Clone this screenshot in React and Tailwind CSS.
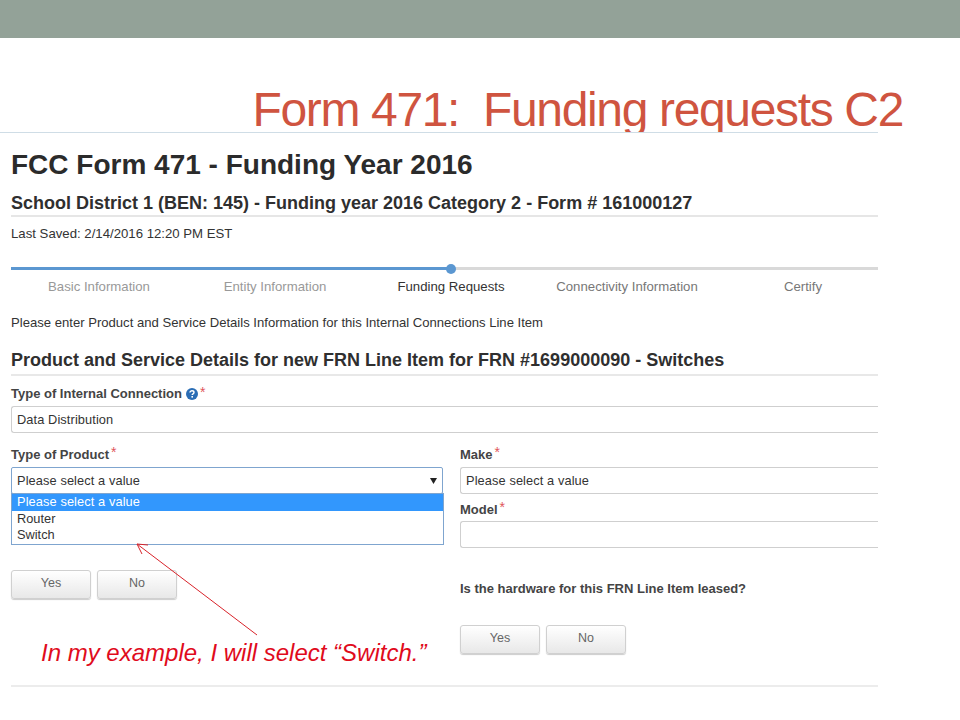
function Req() {
  return <span className="text-[#e0555a] text-[14px] font-normal relative -top-[2px] ml-[2px]">*</span>;
}

function Btn({ label }) {
  return (
    <button className="w-[80px] h-[29px] rounded-[3px] border border-[#d0d0d0] bg-gradient-to-b from-white to-[#e8e8e8] shadow-[0_1px_1px_rgba(0,0,0,0.2)] text-[12.5px] text-[#666] pb-[3px]">
      {label}
    </button>
  );
}

function Label({ children, className = "" }) {
  return <div className={`text-[13px] leading-[16px] font-bold text-[#444] ${className}`}>{children}</div>;
}

function Field({ children, className = "" }) {
  return (
    <div className={`h-[27px] rounded-l-[3px] border border-r-0 border-[#cfcfcf] flex items-center pl-[5px] text-[12.8px] tracking-[0.1px] text-[#333] ${className}`}>
      {children}
    </div>
  );
}

const steps = [
  ["Basic Information", "text-[#999]"],
  ["Entity Information", "text-[#999]"],
  ["Funding Requests", "text-[#333]"],
  ["Connectivity Information", "text-[#777]"],
  ["Certify", "text-[#777]"],
];

export default function App() {
  return (
    <div className="relative w-[960px] h-[720px] overflow-hidden bg-white font-['Liberation_Sans',Arial,sans-serif]">
      <div className="h-[38px] bg-[#93a298]" />
      <div className="h-[94px] overflow-hidden flex justify-end pr-[57px]">
        <h1 className="mt-[39px] text-[48px] leading-[66px] tracking-[-1.35px] whitespace-pre text-[#cf5440]">Form 471:  Funding requests C2</h1>
      </div>
      <div className="w-[878px] border-t border-[#cfdde6] pl-[11px]">
        <div className="mt-[14px] text-[28px] leading-[36px] font-bold text-[#2b2b2b]">FCC Form 471 - Funding Year 2016</div>
        <div className="mt-[10px] text-[18px] leading-[20px] font-bold text-[#2f2f2f]">School District 1 (BEN: 145) - Funding year 2016 Category 2 - Form # 161000127</div>
        <div className="mt-[2px] h-[2px] bg-[#e6e6e6]" />
        <div className="mt-[9px] text-[13.2px] leading-[16px] text-[#333]">Last Saved: 2/14/2016 12:20 PM EST</div>

        <div className="relative mt-[25px] h-[3px] bg-[#d9d9d9]">
          <div className="h-[3px] w-[440px] bg-[#5b97d1]" />
          <div className="absolute left-[435px] -top-[3.5px] w-[10px] h-[10px] rounded-full bg-[#5b97d1]" />
        </div>
        <div className="mt-[8px] grid grid-cols-[repeat(5,176px)] text-[13.2px] leading-[18px] text-center">
          {steps.map(([s, c]) => (
            <div key={s} className={c}>{s}</div>
          ))}
        </div>

        <div className="mt-[18px] text-[13.1px] leading-[18px] text-[#333]">Please enter Product and Service Details Information for this Internal Connections Line Item</div>
        <div className="mt-[17px] text-[18px] leading-[22px] font-bold text-[#2f2f2f]">Product and Service Details for new FRN Line Item for FRN #1699000090 - Switches</div>
        <div className="mt-[3px] h-[2px] bg-[#e8e8e8]" />

        <Label className="mt-[10px] flex items-center">
          Type of Internal Connection
          <svg className="ml-[4px]" width="12" height="12" viewBox="0 0 12 12">
            <circle cx="6" cy="6" r="6" fill="#2a6db5" />
            <path d="M4 4.6C4 3.4 5 2.8 6 2.8C7.2 2.8 8 3.5 8 4.5C8 5.8 6.2 5.8 6.2 7" fill="none" stroke="#fff" strokeWidth="1.4" />
            <rect x="5.4" y="8" width="1.6" height="1.6" fill="#fff" />
          </svg>
          <Req />
        </Label>
        <Field className="mt-[4px]">Data Distribution</Field>

        <div className="mt-[13px] flex gap-[17px]">
          <div className="w-[432px] shrink-0">
            <Label>Type of Product<Req /></Label>
            <div className="relative mt-[4px]">
              <div className="h-[27px] rounded-[2px] border border-[#7fa5cf] flex items-center justify-between pl-[5px] pr-[5px] text-[12.8px] tracking-[0.1px] text-[#333]">
                Please select a value
                <svg width="7" height="6" viewBox="0 0 7 6"><path d="M0 0H7L3.5 6Z" fill="#222" /></svg>
              </div>
              <div className="absolute left-0 top-[26px] w-[433px] h-[52px] border border-[#7fa5cf] bg-white text-[12.8px] text-[#333]">
                <div className="h-[17px] bg-[#3297fd] text-white pl-[5px] leading-[16px] tracking-[0.1px]">Please select a value</div>
                <div className="pl-[5px] leading-[16px]">Router</div>
                <div className="pl-[5px] leading-[16px]">Switch</div>
              </div>
            </div>
            <div className="mt-[76px] flex gap-[6px]">
              <Btn label="Yes" />
              <Btn label="No" />
            </div>
          </div>
          <div className="flex-1">
            <Label>Make<Req /></Label>
            <Field className="mt-[4px]">Please select a value</Field>
            <Label className="mt-[7px]">Model<Req /></Label>
            <Field className="mt-[3px]"></Field>
            <Label className="mt-[33px]">Is the hardware for this FRN Line Item leased?</Label>
            <div className="mt-[28px] flex gap-[6px]">
              <Btn label="Yes" />
              <Btn label="No" />
            </div>
          </div>
        </div>

        <div className="mt-[31px] h-[2px] bg-[#ececec]" />
      </div>

      <svg className="absolute left-[130px] top-[538px]" width="135" height="102" viewBox="0 0 135 102">
        <path d="M127 97L7 6M7 6L12 16M7 6L18 7" fill="none" stroke="#d8232a" strokeWidth="1" />
      </svg>
      <div className="absolute left-[41px] top-[638px] text-[24px] leading-[30px] italic text-[#e00b1c] whitespace-nowrap">In my example, I will select “Switch.”</div>
    </div>
  );
}
